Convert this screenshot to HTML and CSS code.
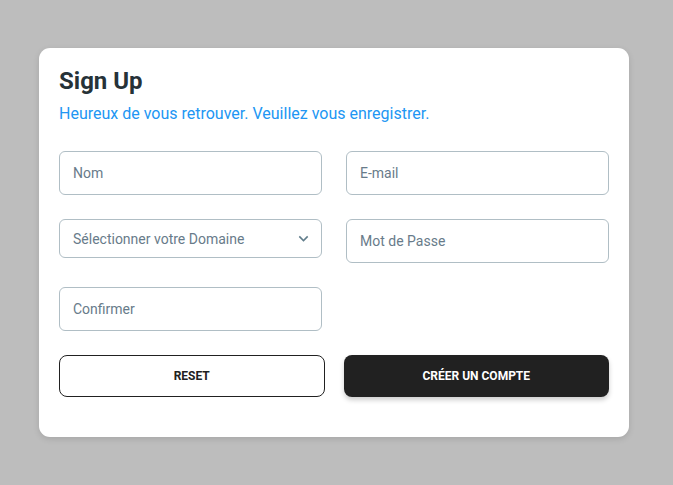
FILE: index.html
```html
<!DOCTYPE html>
<html lang="fr">
<head>
<meta charset="utf-8">
<title>Sign Up</title>
<link rel="stylesheet" href="styles.css">
</head>
<body>
<div class="card">
  <h1 class="title">Sign Up</h1>
  <p class="subtitle">Heureux de vous retrouver. Veuillez vous enregistrer.</p>
  <form class="form">
    <div class="fields">
      <input class="field" type="text" placeholder="Nom">
      <input class="field" type="email" placeholder="E-mail">
      <div class="select-wrap">
        <div class="select">Sélectionner votre Domaine</div>
        <svg class="chevron" viewBox="0 0 24 24" width="19" height="19"><path d="M7.41 8.59 12 13.17l4.59-4.58L18 10l-6 6-6-6 1.41-1.41z" fill="currentColor"/></svg>
      </div>
      <input class="field" type="password" placeholder="Mot de Passe">
      <input class="field" type="password" placeholder="Confirmer">
    </div>
    <div class="actions">
      <button type="reset" class="btn btn-outline">Reset</button>
      <button type="button" class="btn btn-dark">Créer un compte</button>
    </div>
  </form>
</div>
</body>
</html>
```
FILE: styles.css
```css
* { box-sizing: border-box; }
html, body { margin: 0; height: 100%; }
body {
  background: #bdbdbd;
  font-family: Roboto, "Noto Sans", Arial, sans-serif;
  display: flex;
  align-items: center;
  justify-content: center;
  padding-right: 5px;
}
.card {
  width: 590px;
  background: #fff;
  border-radius: 11px;
  padding: 20px 20px 40px 20px;
  box-shadow: 0 2px 6px rgba(0,0,0,0.12);
}
.title {
  margin: 0;
  font-size: 24px;
  line-height: 26px;
  font-weight: 700;
  color: #263238;
}
.subtitle {
  margin: 8px 0 0 0;
  font-size: 16px;
  line-height: 24px;
  color: #2196f3;
}
.form { margin-top: 25px; }
.fields {
  display: grid;
  grid-template-columns: 263px 263px;
  column-gap: 24px;
  row-gap: 24px;
  align-items: start;
}
.field {
  display: block;
  width: 100%;
  height: 44px;
  margin: 0;
  border: 1px solid #b0bec5;
  border-radius: 6px;
  padding: 0 13px;
  font-family: inherit;
  font-size: 14px;
  color: #637381;
  background: #fff;
  outline: none;
}
.field::placeholder { color: #687b8a; opacity: 1; }
.select-wrap { position: relative; }
.select {
  height: 39px;
  border: 1px solid #b0bec5;
  border-radius: 6px;
  padding: 0 13px;
  display: flex;
  align-items: center;
  font-size: 14px;
  color: #687b8a;
}
.chevron {
  position: absolute;
  right: 9px;
  top: 10px;
  color: #607d8b;
}
.actions {
  margin-top: 24px;
  display: grid;
  grid-template-columns: 1fr 1fr;
  column-gap: 19px;
}
.btn {
  height: 42px;
  border-radius: 8px;
  font-family: inherit;
  font-size: 12px;
  font-weight: 700;
  text-transform: uppercase;
  letter-spacing: 0;
  cursor: pointer;
}
.btn-outline {
  background: #fff;
  color: #212121;
  border: 1px solid #212121;
}
.btn-dark {
  background: #212121;
  color: #fff;
  border: none;
  box-shadow: 0 3px 5px rgba(0,0,0,0.2);
}
```
